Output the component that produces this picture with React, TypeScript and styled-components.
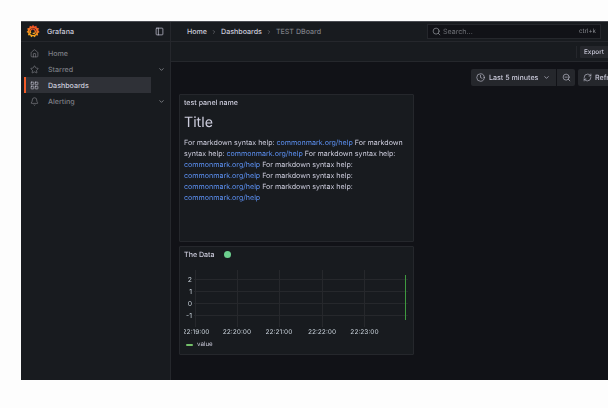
import React from 'react'
import styled, { createGlobalStyle } from 'styled-components'
import {
    Bell,
    ChevronDown,
    ChevronRight,
    Clock,
    Home,
    LayoutGrid,
    PanelLeft,
    RefreshCw,
    Search,
    Star,
    ZoomOut
} from 'lucide-react'

const GlobalStyle = createGlobalStyle`
    html, body {
        margin: 0;
        padding: 0;
        width: 608px;
        height: 408px;
        overflow: hidden;
        background: #fdfdfd;
        font-family: Inter, "Liberation Sans", sans-serif;
        text-rendering: geometricPrecision;
    }
`

const navItems = [
    { label: 'Home', icon: Home },
    { label: 'Starred', icon: Star, expandable: true },
    { label: 'Dashboards', icon: LayoutGrid, active: true },
    { label: 'Alerting', icon: Bell, expandable: true }
]

const helpLine = 'For markdown syntax help: '
const helpCount = 6

const GrafanaLogo = () => (
    <svg width="14" height="15" viewBox="0 0 14 15">
        <defs>
            <linearGradient id="logoFill" x1="0" y1="1" x2="0.3" y2="0">
                <stop offset="0" stopColor="#fcc419" />
                <stop offset="1" stopColor="#ee4a26" />
            </linearGradient>
        </defs>
        <path
            d="M7 .8l1.3 1.7 2.1-.8.4 2.1 2.2.5-.8 2 1.4 1.7-1.8 1.2.3 2.2-2.2-.1-1 1.9-1.9-1.1-1.9 1.1-.9-2-2.2.1.4-2.2L.5 8l1.5-1.6-.8-2 2.2-.6.4-2.1 2 .9z"
            fill="url(#logoFill)"
        />
        <circle cx="7" cy="7.6" r="3.4" fill="#181b1f" />
        <path
            d="M4.9 9.2a2.5 2.5 0 1 1 4.2-.6 1.5 1.5 0 0 1-2.4.2"
            fill="none"
            stroke="url(#logoFill)"
            strokeWidth="1.2"
        />
    </svg>
)

const TimeSeries = () => (
    <ChartSvg width="227" height="66" viewBox="183 270 227 66">
        {[194.5, 236.5, 278.5, 321.5, 363.5].map((x) => (
            <line key={x} x1={x} x2={x} y1="270" y2="327" stroke="#26282c" />
        ))}
        {[279.5, 291.5, 303.5, 315.5].map((y) => (
            <line key={y} x1="193" x2="407" y1={y} y2={y} stroke="#26282c" />
        ))}
        {[
            ['2', 279.5],
            ['1', 291.5],
            ['0', 303.5],
            ['-1', 315.5]
        ].map(([label, y]) => (
            <text key={label} x="191" y={Number(y) + 2.5} textAnchor="end" fontSize="6.8" fill="#c7d0d9">
                {label}
            </text>
        ))}
        {[
            ['22:19:00', 195],
            ['22:20:00', 236],
            ['22:21:00', 278],
            ['22:22:00', 321],
            ['22:23:00', 363.5]
        ].map(([label, x]) => (
            <text key={label} x={x} y="334" textAnchor="middle" fontSize="6.6" fill="#c7d0d9">
                {label}
            </text>
        ))}
        <line x1="404.5" x2="404.5" y1="275" y2="320" stroke="#3f9a3f" strokeWidth="1" />
    </ChartSvg>
)

const App: React.FC = () => {
    return (
        <Page>
            <GlobalStyle />
            <Shell>
                <Sidebar>
                    <Brand>
                        <GrafanaLogo />
                        <BrandName>Grafana</BrandName>
                        <DockButton>
                            <PanelLeft size={9} strokeWidth={1.8} />
                        </DockButton>
                    </Brand>
                    <Nav>
                        {navItems.map(({ label, icon: Icon, active, expandable }) => (
                            <NavRow key={label} $active={active}>
                                <NavIcon $active={active}>
                                    <Icon size={9} strokeWidth={1.6} />
                                </NavIcon>
                                <NavLabel $active={active}>{label}</NavLabel>
                                {expandable && (
                                    <NavChevron>
                                        <ChevronDown size={7} strokeWidth={2.4} />
                                    </NavChevron>
                                )}
                            </NavRow>
                        ))}
                    </Nav>
                </Sidebar>
                <Main>
                    <TopBar>
                        <Crumbs>
                            <Crumb>Home</Crumb>
                            <ChevronRight size={6} strokeWidth={2} />
                            <Crumb>Dashboards</Crumb>
                            <ChevronRight size={6} strokeWidth={2} />
                            <Crumb $current>TEST DBoard</Crumb>
                        </Crumbs>
                        <SearchBox>
                            <Search size={9} strokeWidth={1.8} />
                            <SearchText>Search...</SearchText>
                            <Shortcut>ctrl+k</Shortcut>
                        </SearchBox>
                    </TopBar>
                    <ActionBar>
                        <Divider />
                        <ExportButton>
                            Export
                            <ChevronDown size={8} strokeWidth={2} />
                        </ExportButton>
                    </ActionBar>
                    <Content>
                        <TimeControls>
                            <TimePicker>
                                <Clock size={9} strokeWidth={1.6} />
                                <TimeLabel>Last 5 minutes</TimeLabel>
                                <ChevronDown size={7} strokeWidth={2.2} />
                            </TimePicker>
                            <ZoomButton>
                                <ZoomOut size={9} strokeWidth={1.6} />
                            </ZoomButton>
                            <RefreshButton>
                                <RefreshCw size={9} strokeWidth={1.6} />
                                <span>Refresh</span>
                            </RefreshButton>
                        </TimeControls>
                        <Panel $height={148}>
                            <PanelTitle>test panel name</PanelTitle>
                            <Markdown>
                                <h1>Title</h1>
                                <p>
                                    {Array.from({ length: helpCount }).map((_, i) => (
                                        <React.Fragment key={i}>
                                            {helpLine}
                                            <a href="#help">commonmark.org/help</a>{' '}
                                        </React.Fragment>
                                    ))}
                                </p>
                            </Markdown>
                        </Panel>
                        <Panel $height={109}>
                            <PanelHeading>
                                <DataTitle>The Data</DataTitle>
                                <StatusDot />
                            </PanelHeading>
                            <TimeSeries />
                            <Legend>
                                <LegendSwatch />
                                <span>value</span>
                            </Legend>
                        </Panel>
                    </Content>
                </Main>
            </Shell>
        </Page>
    )
}

export default App

const Page = styled.div`
    width: 608px;
    height: 408px;
    padding: 21px 0 28px 21px;
    box-sizing: border-box;
    overflow: hidden;
`

// the reference is a downscaled capture, the slight blur also gives grey text edges
const Shell = styled.div`
    display: flex;
    height: 100%;
    background: #111217;
    border-top: 1px solid #4a4c52;
    box-sizing: border-box;
    filter: blur(0.35px);
`

const Sidebar = styled.aside`
    width: 150px;
    flex: none;
    background: #181b1f;
    border-right: 1px solid #25272c;
    box-sizing: border-box;
`

const Brand = styled.div`
    display: flex;
    align-items: center;
    height: 19px;
    padding: 0 6px 0 5px;
    border-bottom: 1px solid #25272c;
`

const BrandName = styled.span`
    margin-left: 7px;
    font-size: 7.1px;
    font-weight: 500;
    color: #ccccdc;
`

const DockButton = styled.span`
    display: flex;
    margin-left: auto;
    color: #ccccdc;
`

const Nav = styled.nav`
    display: flex;
    flex-direction: column;
    padding: 3px 0 0 3px;
`

const NavRow = styled.div<{ $active?: boolean }>`
    display: flex;
    align-items: center;
    width: 127px;
    height: 16px;
    padding-left: 4px;
    box-sizing: border-box;
    background: ${(p) => (p.$active ? '#2f3137' : 'transparent')};
    border-left: 2px solid ${(p) => (p.$active ? '#f05a28' : 'transparent')};
`

const NavIcon = styled.span<{ $active?: boolean }>`
    display: flex;
    color: ${(p) => (p.$active ? '#ccccdc' : '#8a8c92')};
`

const NavLabel = styled.span<{ $active?: boolean }>`
    margin-left: 9px;
    font-size: 7.1px;
    font-weight: 500;
    color: ${(p) => (p.$active ? '#ccccdc' : '#7d7f85')};
`

const NavChevron = styled.span`
    display: flex;
    margin-left: auto;
    margin-right: -14px;
    color: #9a9ca2;
`

const Main = styled.main`
    flex: 1;
    min-width: 0;
    display: flex;
    flex-direction: column;
`

const TopBar = styled.div`
    display: flex;
    align-items: center;
    flex: none;
    height: 19px;
    padding: 0 7px 0 16px;
    background: #181b1f;
    border-bottom: 1px solid #25272c;
`

const Crumbs = styled.div`
    display: flex;
    align-items: center;
    gap: 4px;
    color: #8a8c92;
`

const Crumb = styled.span<{ $current?: boolean }>`
    font-size: 7.1px;
    font-weight: 500;
    color: ${(p) => (p.$current ? '#7d7f85' : '#ccccdc')};
`

const SearchBox = styled.div`
    display: flex;
    align-items: center;
    gap: 2px;
    width: 174px;
    height: 15px;
    margin-left: auto;
    padding: 0 4px;
    box-sizing: border-box;
    background: #111217;
    border: 1px solid #25272c;
    color: #9a9ca2;
`

const SearchText = styled.span`
    font-size: 7.1px;
    color: #6e7076;
`

const Shortcut = styled.span`
    margin-left: auto;
    font-size: 6.2px;
    color: #8a8c92;
`

const ActionBar = styled.div`
    display: flex;
    align-items: center;
    flex: none;
    height: 19px;
    padding-left: 405px;
    background: #181b1f;
    border-bottom: 1px solid #25272c;
`

const Divider = styled.span`
    width: 1px;
    height: 12px;
    flex: none;
    background: #25272c;
`

const ExportButton = styled.div`
    display: flex;
    align-items: center;
    gap: 3px;
    flex: none;
    height: 12px;
    margin-left: 3px;
    padding: 0 4px;
    border-radius: 1px;
    background: #25272c;
    font-size: 6.4px;
    font-weight: 500;
    color: #ccccdc;
`

const Content = styled.div`
    flex: 1;
    min-height: 0;
    padding: 7px 0 0 8px;
    display: flex;
    flex-direction: column;
    gap: 4px;
`

const TimeControls = styled.div`
    display: flex;
    align-items: center;
    flex: none;
    height: 17px;
    margin-bottom: 4px;
    padding-left: 292px;
    font-size: 7.1px;
    font-weight: 500;
    color: #ccccdc;
`

const ControlButton = styled.div`
    display: flex;
    align-items: center;
    flex: none;
    height: 17px;
    background: #25272c;
    border-radius: 2px;
`

const TimePicker = styled(ControlButton)`
    width: 85px;
    padding: 0 6px 0 5px;
    box-sizing: border-box;
    border-radius: 2px 0 0 2px;
`

const TimeLabel = styled.span`
    margin: 0 auto 0 4px;
    white-space: nowrap;
`

const ZoomButton = styled(ControlButton)`
    width: 18px;
    margin-left: 1px;
    justify-content: center;
    border-radius: 0 2px 2px 0;
`

const RefreshButton = styled(ControlButton)`
    gap: 3px;
    margin-left: 3px;
    padding: 0 5px;
`

const Panel = styled.section<{ $height: number }>`
    flex: none;
    width: 235px;
    height: ${(p) => p.$height}px;
    box-sizing: border-box;
    background: #181b1f;
    border: 1px solid #25272c;
    border-radius: 1px;
    padding: 0 4px;
    overflow: hidden;
`

const PanelTitle = styled.h2`
    margin: 0;
    padding-top: 3px;
    height: 14px;
    box-sizing: border-box;
    font-size: 7.1px;
    font-weight: 500;
    line-height: 9px;
    color: #ccccdc;
`

const Markdown = styled.div`
    color: #ccccdc;
    h1 {
        margin: 5px 0 5px;
        font-size: 14.2px;
        font-weight: 400;
        line-height: 18px;
    }
    p {
        margin: 0;
        font-size: 7.1px;
        line-height: 11px;
    }
    a {
        color: #5b8ff0;
        text-decoration: none;
    }
`

const PanelHeading = styled.div`
    display: flex;
    align-items: center;
    gap: 9px;
    height: 15px;
`

const DataTitle = styled.span`
    font-size: 7.1px;
    font-weight: 500;
    color: #ccccdc;
`

const StatusDot = styled.span`
    width: 7px;
    height: 7px;
    border-radius: 50%;
    background: #6ccf8e;
`

const ChartSvg = styled.svg`
    display: block;
    margin-top: 8px;
    font-family: Inter, "Liberation Sans", sans-serif;
`

const Legend = styled.div`
    display: flex;
    align-items: center;
    gap: 4px;
    margin: 5px 0 0 2px;
    font-size: 6.2px;
    color: #ccccdc;
`

const LegendSwatch = styled.span`
    width: 7px;
    height: 2px;
    border-radius: 1px;
    background: #73bf69;
`
